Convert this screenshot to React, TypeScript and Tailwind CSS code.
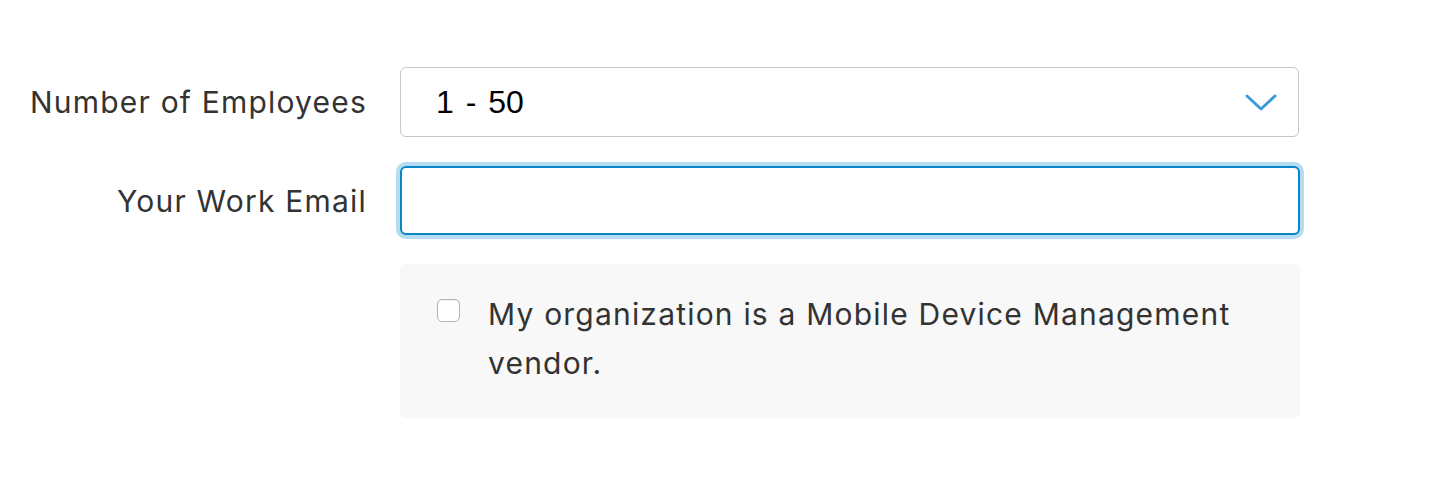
import { useState } from "react";

export default function App() {
  const [vendor, setVendor] = useState(false);

  return (
    <div className="w-[1456px] h-[478px] bg-white pt-[67px] font-['Inter',sans-serif] text-[#333333] tracking-[1.2px]">
      <div className="flex items-center">
        <label className="w-[400px] pr-[33px] text-right text-[30px] leading-none">
          Number of Employees
        </label>
        <div className="relative w-[899px] h-[70px] rounded-[6px] border border-[#c6c6c6] bg-white flex items-center">
          <span className="pl-[35px] text-[32px] text-black tracking-normal font-['Liberation_Sans',sans-serif] [word-spacing:3px]">
            1 - 50
          </span>
          <svg
            className="absolute right-[21px] top-[26px]"
            width="32"
            height="18"
            viewBox="0 0 32 18"
            fill="none"
          >
            <path d="M2 2 L16 15 L30 2" stroke="#3a9bd9" strokeWidth="3" strokeLinecap="round" strokeLinejoin="round" />
          </svg>
        </div>
      </div>

      <div className="flex items-center mt-[29px]">
        <label className="w-[400px] pr-[33px] text-right text-[30px] leading-none">
          Your Work Email
        </label>
        <input
          type="email"
          className="w-[900px] h-[69px] rounded-[6px] border-2 border-[#0a86c8] bg-white outline-none ring-4 ring-[#b5dcf1] px-4 text-[28px]"
        />
      </div>

      <div className="flex mt-[29px]">
        <div className="w-[400px]" />
        <div className="w-[900px] h-[154px] rounded-[5px] bg-[#f8f8f8] pl-[37px] pr-[30px] pt-[26px] flex">
          <div className="pt-[9px]">
            <button
              onClick={() => setVendor(!vendor)}
              className="block w-[23px] h-[23px] rounded-[5px] border border-[#b3b3b3] bg-white shadow-[inset_0_1px_1px_rgba(0,0,0,0.05)]"
            />
          </div>
          <p className="ml-[28px] text-[30px] leading-[49px] w-[780px]">
            My organization is a Mobile Device Management vendor.
          </p>
        </div>
      </div>
    </div>
  );
}
